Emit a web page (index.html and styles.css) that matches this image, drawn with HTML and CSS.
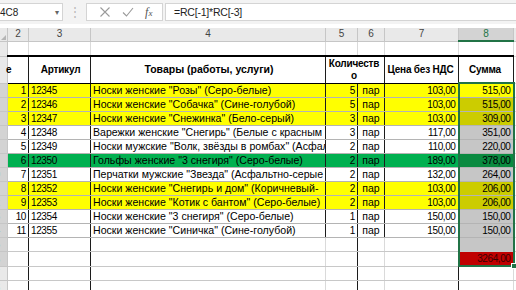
FILE: index.html
```html
<!DOCTYPE html>
<html lang="ru">
<head>
    <meta charset="UTF-8">
    <title>Счёт</title>
    <link rel="stylesheet" href="styles.css">
</head>
<body>
    <div class="formula-bar">
        <div class="name-box"><span>4C8</span><span class="caret">&#9662;</span></div>
        <div class="grip">&#8942;</div>
        <div class="fx-buttons">
            <svg class="ico" width="12" height="12" viewBox="0 0 12 12"><path d="M1.5 1.5 L10.5 10.5 M10.5 1.5 L1.5 10.5" stroke="#9a9a9a" stroke-width="1.1" fill="none"/></svg>
            <svg class="ico" width="12" height="12" viewBox="0 0 12 12"><path d="M1 6.5 L4.5 10 L11 2" stroke="#9a9a9a" stroke-width="1.1" fill="none"/></svg>
            <span class="fx">f<i>x</i></span>
        </div>
        <div class="formula">=RC[-1]*RC[-3]</div>
    </div>

    <div class="sheet">
        <table class="grid">
            <colgroup>
                <col style="width:26px"><col style="width:21px"><col style="width:62px"><col style="width:235px">
                <col style="width:32px"><col style="width:27px"><col style="width:74px"><col style="width:55px"><col style="width:40px">
            </colgroup>
            <tr class="col-heads">
                <th class="corner"><span class="tri"></span></th>
                <th>2</th><th>3</th><th>4</th><th>5</th><th>6</th><th>7</th><th class="on">8</th><th></th>
            </tr>
            <tr class="r">
                <th class="rh">2</th><td></td><td></td><td></td><td></td><td></td><td></td><td></td><td></td>
            </tr>
            <tr class="r head">
                <th class="rh">3</th>
                <td class="c-n"><span class="cut">е</span></td>
                <td class="c-a">Артикул</td>
                <td class="c-name">Товары (работы, услуги)</td>
                <td class="c-q" colspan="2">Количеств<br>о</td>
                <td class="c-p">Цена без НДС</td>
                <td class="c-s">Сумма</td>
                <td class="c-x"></td>
            </tr>
            <tr class="r data yellow">
                <th class="rh sel">4</th><td class="c-n">1</td><td class="c-a">12345</td><td class="c-name">Носки женские "Розы" (Серо-белые)</td><td class="c-q">5</td><td class="c-u">пар</td><td class="c-p">103,00</td><td class="c-s active top">515,00</td><td class="c-x"></td>
            </tr>
            <tr class="r data yellow">
                <th class="rh sel">5</th><td class="c-n">2</td><td class="c-a">12346</td><td class="c-name">Носки женские "Собачка" (Сине-голубой)</td><td class="c-q">5</td><td class="c-u">пар</td><td class="c-p">103,00</td><td class="c-s">515,00</td><td class="c-x"></td>
            </tr>
            <tr class="r data yellow">
                <th class="rh sel">6</th><td class="c-n">3</td><td class="c-a">12347</td><td class="c-name">Носки женские "Снежинка" (Бело-серый)</td><td class="c-q">3</td><td class="c-u">пар</td><td class="c-p">103,00</td><td class="c-s">309,00</td><td class="c-x"></td>
            </tr>
            <tr class="r data">
                <th class="rh sel">7</th><td class="c-n">4</td><td class="c-a">12348</td><td class="c-name">Варежки женские "Снегирь" (Белые с красным</td><td class="c-q">3</td><td class="c-u">пар</td><td class="c-p">117,00</td><td class="c-s">351,00</td><td class="c-x"></td>
            </tr>
            <tr class="r data">
                <th class="rh sel">8</th><td class="c-n">5</td><td class="c-a">12349</td><td class="c-name">Носки мужские "Волк, звёзды в ромбах" (Асфальт-</td><td class="c-q">2</td><td class="c-u">пар</td><td class="c-p">110,00</td><td class="c-s">220,00</td><td class="c-x"></td>
            </tr>
            <tr class="r data green">
                <th class="rh sel">9</th><td class="c-n">6</td><td class="c-a">12350</td><td class="c-name">Гольфы женские "3 снегиря" (Серо-белые)</td><td class="c-q">2</td><td class="c-u">пар</td><td class="c-p">189,00</td><td class="c-s">378,00</td><td class="c-x"></td>
            </tr>
            <tr class="r data">
                <th class="rh sel">10</th><td class="c-n">7</td><td class="c-a">12351</td><td class="c-name">Перчатки мужские "Звезда" (Асфальтно-серые с</td><td class="c-q">2</td><td class="c-u">пар</td><td class="c-p">132,00</td><td class="c-s">264,00</td><td class="c-x"></td>
            </tr>
            <tr class="r data yellow">
                <th class="rh sel">11</th><td class="c-n">8</td><td class="c-a">12352</td><td class="c-name">Носки женские "Снегирь и дом" (Коричневый-</td><td class="c-q">2</td><td class="c-u">пар</td><td class="c-p">103,00</td><td class="c-s">206,00</td><td class="c-x"></td>
            </tr>
            <tr class="r data yellow">
                <th class="rh sel">12</th><td class="c-n">9</td><td class="c-a">12353</td><td class="c-name">Носки женские "Котик с бантом" (Серо-белые)</td><td class="c-q">2</td><td class="c-u">пар</td><td class="c-p">103,00</td><td class="c-s">206,00</td><td class="c-x"></td>
            </tr>
            <tr class="r data">
                <th class="rh sel">13</th><td class="c-n">10</td><td class="c-a">12354</td><td class="c-name">Носки женские "3 снегиря" (Серо-белые)</td><td class="c-q">1</td><td class="c-u">пар</td><td class="c-p">150,00</td><td class="c-s">150,00</td><td class="c-x"></td>
            </tr>
            <tr class="r data">
                <th class="rh sel">14</th><td class="c-n">11</td><td class="c-a">12355</td><td class="c-name">Носки женские "Синичка" (Сине-голубой)</td><td class="c-q">1</td><td class="c-u">пар</td><td class="c-p">150,00</td><td class="c-s">150,00</td><td class="c-x"></td>
            </tr>
            <tr class="r foot">
                <th class="rh sel">15</th><td class="c-n"></td><td class="c-a"></td><td class="c-name"></td><td class="c-q"></td><td class="c-u"></td><td class="c-p"></td><td class="c-s"></td><td class="c-x"></td>
            </tr>
            <tr class="r foot">
                <th class="rh sel">16</th><td class="c-n"></td><td class="c-a"></td><td class="c-name"></td><td class="c-q"></td><td class="c-u"></td><td class="c-p"></td><td class="c-s total bottom">3264,00<span class="handle"></span></td><td class="c-x"></td>
            </tr>
            <tr class="r foot dark">
                <th class="rh">17</th><td class="c-n"></td><td class="c-a"></td><td class="c-name"></td><td class="c-q"></td><td class="c-u"></td><td class="c-p"></td><td class="c-s"></td><td class="c-x"></td>
            </tr>
            <tr class="r foot dark">
                <th class="rh">18</th><td class="c-n"></td><td class="c-a"></td><td class="c-name"></td><td class="c-q"></td><td class="c-u"></td><td class="c-p"></td><td class="c-s"></td><td class="c-x"></td>
            </tr>
        </table>
    </div>
</body>
</html>
```

FILE: styles.css
```css
html,
body {
    margin: 0;
    padding: 0;
}

body {
    width: 516px;
    height: 290px;
    overflow: hidden;
    background: #fff;
    font-family: "Liberation Sans", Arial, sans-serif;
    font-size: 10px;
    color: #000;
}

/* строка формул */
.formula-bar {
    display: flex;
    align-items: center;
    height: 24px;
    background: #f3f3f3;
    margin-bottom: 4px;
}

.name-box {
    display: flex;
    align-items: center;
    justify-content: space-between;
    width: 63px;
    height: 18px;
    box-sizing: border-box;
    background: #fff;
    border: 1px solid #d4d4d4;
    border-left: none;
    padding-right: 3px;
    color: #222;
}

.name-box .caret {
    font-size: 8px;
    color: #666;
}

.grip {
    width: 23px;
    text-align: center;
    color: #b8b8b8;
    font-size: 12px;
}

.fx-buttons {
    display: flex;
    align-items: center;
    justify-content: space-around;
    width: 77px;
    height: 18px;
    box-sizing: border-box;
    background: #fff;
    border: 1px solid #d4d4d4;
    padding: 0 4px 0 6px;
}

.fx {
    font-family: "Liberation Serif", serif;
    font-style: italic;
    font-size: 12px;
    color: #555;
}

.fx i {
    font-size: 9px;
}

.formula {
    flex: 1;
    height: 18px;
    line-height: 16px;
    box-sizing: border-box;
    margin-left: 2px;
    background: #fff;
    border: 1px solid #d4d4d4;
    border-right: none;
    padding-left: 8px;
    font-size: 10.5px;
    letter-spacing: -0.2px;
    color: #222;
}

/* лист */
.sheet {
    overflow: hidden;
}

.grid {
    margin-left: -19px;
    width: 572px;
    table-layout: fixed;
    border-collapse: collapse;
    letter-spacing: -0.4px;
}

.grid td,
.grid th {
    padding: 0;
    height: 13px;
    line-height: 13px;
    white-space: nowrap;
    overflow: hidden;
    border: 1px solid #dadada;
    vertical-align: bottom;
}

.col-heads th {
    height: 12px;
    line-height: 12px;
    background: #e9e9e9;
    border: 1px solid #c6c6c6;
    border-top: none;
    font-weight: normal;
    color: #444;
    text-align: center;
    vertical-align: middle;
    letter-spacing: 0;
}

.col-heads th.on {
    background: #d3d3d3;
    color: #217346;
    border-bottom: 2px solid #217346;
}

.corner {
    position: relative;
}

.tri {
    position: absolute;
    right: 1px;
    bottom: 1px;
    border-left: 5px solid transparent;
    border-bottom: 5px solid #b5b5b5;
}

.rh {
    background: #e9e9e9;
    border-color: #c6c6c6 !important;
    color: #444;
    font-weight: normal;
    text-align: center;
}

.rh.sel {
    background: #d3d3d3;
    color: #217346;
}

/* шапка таблицы */
.head td {
    height: 25px;
    font-weight: bold;
    text-align: center;
    vertical-align: middle;
    letter-spacing: -0.2px;
    border-top: 2px solid #000;
    border-bottom: 1px solid #000;
    border-left: 1px solid #1c1c1c;
    border-right: 1px solid #1c1c1c;
}

.head td.c-n {
    text-align: left;
    overflow: visible;
}

.head td.c-name {
    font-size: 10.5px;
    letter-spacing: 0;
}

.head .cut {
    margin-left: -2px;
}

.head td.c-q {
    line-height: 12px;
}

.head td.c-x {
    border-top-color: #dadada;
    border-top-width: 1px;
    border-bottom-color: #dadada;
    border-right-color: #dadada;
}

/* строки данных */
.data td {
    border-top: 1px solid #b4b4b4;
    border-bottom: 1px solid #b4b4b4;
    border-left: 1px solid #1c1c1c;
    border-right: 1px solid #1c1c1c;
}

.data td.c-name {
    font-size: 10.6px;
    letter-spacing: 0;
}

.data td.c-u {
    font-size: 10.5px;
    letter-spacing: 0;
}

.data td.c-x {
    border-color: #dadada;
}

.c-n,
.c-q,
.c-p,
.c-s {
    text-align: right;
    padding-right: 2px !important;
}

.c-a,
.c-name {
    padding-left: 2px !important;
}

.c-u {
    text-align: center;
}

.yellow td {
    background: #ffff00;
}

.green td {
    background: #00b050;
}

.yellow td.c-x,
.green td.c-x {
    background: #fff;
}

/* выделенный диапазон */
.data td.c-s,
.foot td.c-s {
    background: #c6c6c6;
    border-left: 2px solid #217346;
    border-right: 2px solid #217346;
}

.yellow td.c-s {
    background: #cccc00;
}

.green td.c-s {
    background: #0a8a40;
}

.data td.c-s.active {
    background: #ffff00;
}

.data td.c-s.top {
    border-top: 2px solid #217346;
}

.foot td.c-s.total {
    background: #c00000;
    color: #3a0000;
    position: relative;
    overflow: visible;
    border-bottom: 2px solid #217346;
}

.handle {
    position: absolute;
    right: -4px;
    bottom: -4px;
    width: 4px;
    height: 4px;
    background: #217346;
    border: 1px solid #fff;
}

.foot.dark td.c-s {
    background: #fff;
    border-left: 1px solid #1c1c1c;
    border-right: 1px solid #dadada;
}

/* пустые строки под таблицей */
.foot td {
    border-top: 1px solid #c8c8c8;
    border-bottom: 1px solid #c8c8c8;
}

.foot td.c-n,
.foot td.c-a,
.foot td.c-q,
.foot td.c-p {
    border-right: 1px solid #1c1c1c;
}

.foot.dark td {
    border-top-color: #555;
}
```
